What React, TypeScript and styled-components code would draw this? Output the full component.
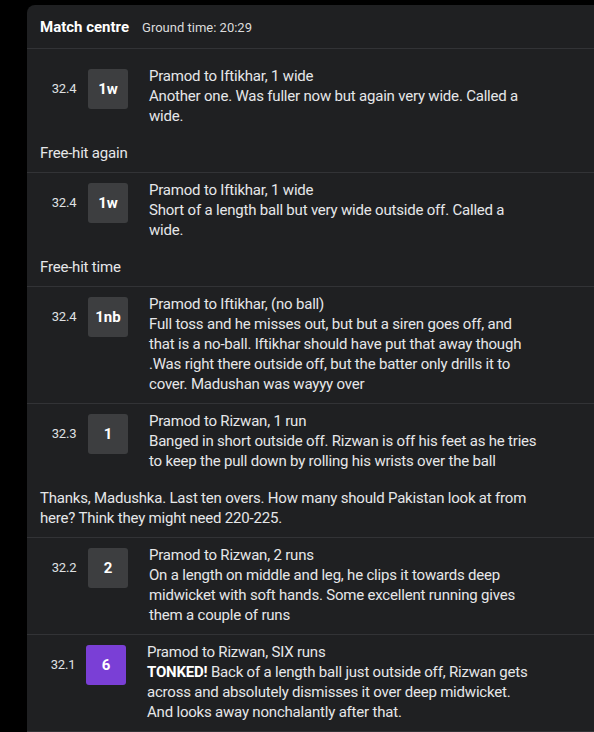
import * as React from 'react';
import styled, { createGlobalStyle } from 'styled-components';

type Ball = {
    over: string;
    result: string;
    boundary?: boolean;
    title: string;
    lead?: string;
    lines: string[];
    comment?: string[];
};

const balls: Ball[] = [
    {
        over: '32.4',
        result: '1w',
        title: 'Pramod to Iftikhar, 1 wide',
        lines: ['Another one. Was fuller now but again very wide. Called a', 'wide.'],
        comment: ['Free-hit again'],
    },
    {
        over: '32.4',
        result: '1w',
        title: 'Pramod to Iftikhar, 1 wide',
        lines: ['Short of a length ball but very wide outside off. Called a', 'wide.'],
        comment: ['Free-hit time'],
    },
    {
        over: '32.4',
        result: '1nb',
        title: 'Pramod to Iftikhar, (no ball)',
        lines: [
            'Full toss and he misses out, but but a siren goes off, and',
            'that is a no-ball. Iftikhar should have put that away though',
            '.Was right there outside off, but the batter only drills it to',
            'cover. Madushan was wayyy over',
        ],
    },
    {
        over: '32.3',
        result: '1',
        title: 'Pramod to Rizwan, 1 run',
        lines: [
            'Banged in short outside off. Rizwan is off his feet as he tries',
            'to keep the pull down by rolling his wrists over the ball',
        ],
        comment: [
            'Thanks, Madushka. Last ten overs. How many should Pakistan look at from',
            'here? Think they might need 220-225.',
        ],
    },
    {
        over: '32.2',
        result: '2',
        title: 'Pramod to Rizwan, 2 runs',
        lines: [
            'On a length on middle and leg, he clips it towards deep',
            'midwicket with soft hands. Some excellent running gives',
            'them a couple of runs',
        ],
    },
    {
        over: '32.1',
        result: '6',
        boundary: true,
        title: 'Pramod to Rizwan, SIX runs',
        lead: 'TONKED!',
        lines: [
            'Back of a length ball just outside off, Rizwan gets',
            'across and absolutely dismisses it over deep midwicket.',
            'And looks away nonchalantly after that.',
        ],
    },
];

const App = () => {
    return (
        <>
            <GlobalStyle />
            <Page>
                <Panel>
                    <Header.Container>
                        <Header.Title>Match centre</Header.Title>
                        <Header.Time>Ground time: 20:29</Header.Time>
                    </Header.Container>

                    <Feed>
                        {balls.map((ball, i) => (
                            <Row.Container key={i}>
                                <Row.BallLine>
                                    <Row.Over $narrow={ball.boundary}>{ball.over}</Row.Over>
                                    <Row.Result $boundary={ball.boundary}>{ball.result}</Row.Result>
                                    <Row.Body>
                                        <Row.Line>{ball.title}</Row.Line>
                                        {ball.lines.map((line, j) => (
                                            <Row.Line key={j}>
                                                {j === 0 && ball.lead && <strong>{ball.lead} </strong>}
                                                {line}
                                            </Row.Line>
                                        ))}
                                    </Row.Body>
                                </Row.BallLine>
                                {ball.comment && (
                                    <Row.Comment>
                                        {ball.comment.map((line, j) => (
                                            <Row.Line key={j}>{line}</Row.Line>
                                        ))}
                                    </Row.Comment>
                                )}
                            </Row.Container>
                        ))}
                    </Feed>
                </Panel>
            </Page>
        </>
    );
};

export default App;

const GlobalStyle = createGlobalStyle`
    html, body {
        margin: 0;
        padding: 0;
        background: #000000;
        overflow: hidden;
    }

    body {
        font-family: Roboto, "Noto Sans", sans-serif;
        color: #e6e7e9;
    }
`;

const Page = styled.div`
    padding: 5px 0 0 27px;
    height: 732px;
    box-sizing: border-box;
`;

const Panel = styled.div`
    background: #1f2022;
    border-radius: 8px 0 0 0;
    height: 100%;
`;

const Header = {
    Container: styled.div`
        display: flex;
        align-items: baseline;
        gap: 13px;

        height: 44px;
        padding: 13px 13px 0;
        box-sizing: border-box;

        border-bottom: 1px solid #323336;
    `,

    Title: styled.h2`
        margin: 0;
        font-size: 15px;
        font-weight: 700;
        color: #ffffff;
    `,

    Time: styled.span`
        font-size: 13px;
        color: #dcdcdc;
    `,
};

const Feed = styled.div`
    padding-top: 10px;
`;

const Row = {
    Container: styled.div`
        padding: 7px 13px 9px;
        border-bottom: 1px solid #323336;
    `,

    BallLine: styled.div`
        display: flex;
        align-items: flex-start;
        min-height: 60px;
    `,

    Over: styled.div<{ $narrow?: boolean }>`
        flex: 0 0 ${(p) => (p.$narrow ? '46px' : '48px')};
        padding-top: 13px;

        font-size: 13px;
        line-height: 20px;
        letter-spacing: -0.2px;
        text-align: center;
        color: #dfe0e2;
    `,

    Result: styled.div<{ $boundary?: boolean }>`
        flex: 0 0 40px;
        height: 40px;
        margin-top: 3px;

        display: flex;
        align-items: center;
        justify-content: center;

        background: ${(p) => (p.$boundary ? '#7a3fd6' : '#3d3e40')};
        border-radius: 3px;

        font-size: 15px;
        font-weight: 700;
        color: #ffffff;
    `,

    Body: styled.div`
        margin-left: 21px;

        font-size: 15px;
        line-height: 20px;
        letter-spacing: -0.2px;

        strong {
            font-weight: 700;
            color: #ffffff;
        }
    `,

    Line: styled.div`
        white-space: nowrap;
    `,

    Comment: styled.div`
        margin-top: 17px;

        font-size: 15px;
        line-height: 20px;
        letter-spacing: -0.2px;
    `,
};
